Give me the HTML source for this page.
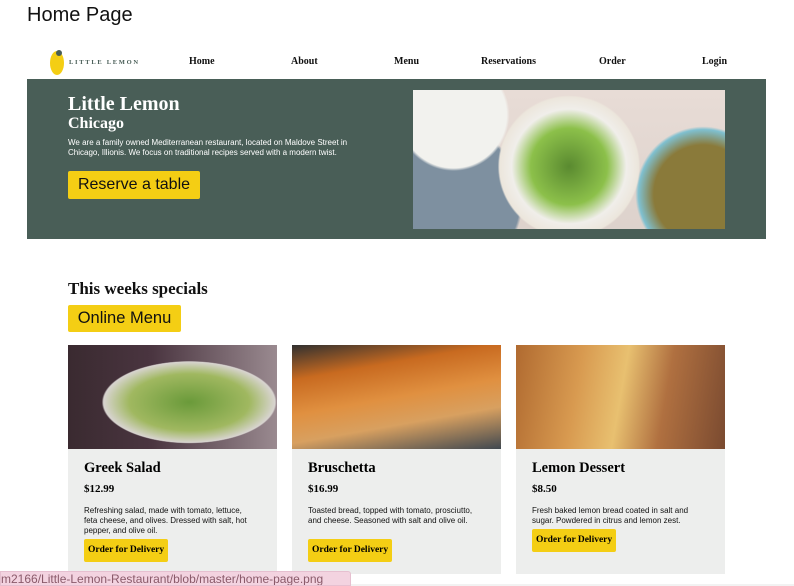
<!DOCTYPE html>
<html><head><meta charset="utf-8"><style>
*{margin:0;padding:0;box-sizing:border-box}
body{width:794px;height:586px;overflow:hidden;background:#fff;position:relative;font-family:"Liberation Sans",sans-serif}
.a{position:absolute}
.serif{font-family:"Liberation Serif",serif;font-weight:bold}
.nav{top:56px;font-size:10px;color:#111}
.card{background:#edeeed;top:449px;height:125px;width:209px}
.card h3{position:absolute;left:16px;top:11px;font-size:14.5px}
.card .p{position:absolute;left:16px;top:34px;font-size:11px}
.card .d{position:absolute;left:16px;top:57px;font-size:8px;line-height:10px;color:#111;width:172px}
.btn{position:absolute;left:16px;background:#f4ce14;border-radius:2px;font-family:"Liberation Serif",serif;font-weight:bold;font-size:9.5px;padding:6px 4px;height:23px;line-height:11px}
</style></head><body>
<div class="a" style="left:27px;top:4px;font-size:20px;color:#111">Home Page</div>
<div class="a" style="left:50px;top:51px;width:14px;height:24px;background:#f4ce14;border-radius:50%"></div>
<div class="a" style="left:56px;top:50px;width:6px;height:6px;background:#495e57;border-radius:50%"></div>
<div class="a serif" style="left:69px;top:59px;font-size:6.5px;letter-spacing:1.7px;color:#495e57">LITTLE LEMON</div>
<div class="a serif nav" style="left:189px">Home</div>
<div class="a serif nav" style="left:291px">About</div>
<div class="a serif nav" style="left:394px">Menu</div>
<div class="a serif nav" style="left:481px">Reservations</div>
<div class="a serif nav" style="left:599px">Order</div>
<div class="a serif nav" style="left:702px">Login</div>
<div class="a" style="left:27px;top:79px;width:739px;height:160px;background:#495e57"></div>
<div class="a serif" style="left:68px;top:93px;font-size:20px;color:#fff">Little Lemon</div>
<div class="a serif" style="left:68px;top:115px;font-size:16px;color:#fff">Chicago</div>
<div class="a" style="left:68px;top:138px;font-size:8px;line-height:10px;color:#fff;width:290px">We are a family owned Mediterranean restaurant, located on Maldove Street in Chicago, Illionis. We focus on traditional recipes served with a modern twist.</div>
<div class="a" style="left:68px;top:171px;width:132px;height:28px;background:#f4ce14;border-radius:2px;font-size:16px;line-height:28px;text-align:center;color:#111">Reserve a table</div>
<div class="a" style="left:413px;top:90px;width:312px;height:139px;background:radial-gradient(circle at 50% 55%,#5a8a30 0,#8cc04a 22%,#f0eeea 33%,#ece6dc 40%,transparent 41%),radial-gradient(circle at 13% 18%,#f2f2ee 18%,transparent 19%),radial-gradient(circle at 10% 80%,#7e90a0 25%,transparent 26%),radial-gradient(circle at 93% 75%,#8a7a3a 16%,#7fc0d0 21%,transparent 22%),linear-gradient(#e8dcd6,#ddd2cc)"></div>
<div class="a serif" style="left:68px;top:279px;font-size:17px;color:#111">This weeks specials</div>
<div class="a" style="left:68px;top:305px;width:113px;height:27px;background:#f4ce14;border-radius:2px;font-size:16.5px;line-height:27px;text-align:center;color:#111">Online Menu</div>
<div class="a" style="left:68px;top:345px;width:209px;height:104px;background:radial-gradient(ellipse at 58% 55%,#6a9a3a 0,#a0b860 35%,#d8d4d0 50%,transparent 51%),linear-gradient(90deg,#3a2a30,#4a3540 40%,#9a8a90)"></div>
<div class="a" style="left:292px;top:345px;width:209px;height:104px;background:linear-gradient(170deg,#303030 0,#c86a20 25%,#e09040 50%,#d8a060 70%,#404850 100%)"></div>
<div class="a" style="left:516px;top:345px;width:209px;height:104px;background:linear-gradient(100deg,#b06a30 0,#d89a50 30%,#e8c070 50%,#b07040 70%,#7a4a30 100%)"></div>
<div class="a card" style="left:68px"><h3 class="serif">Greek Salad</h3><div class="p serif">$12.99</div><div class="d">Refreshing salad, made with tomato, lettuce, feta cheese, and olives. Dressed with salt, hot pepper, and olive oil.</div><div class="btn" style="top:90px">Order for Delivery</div></div>
<div class="a card" style="left:292px"><h3 class="serif">Bruschetta</h3><div class="p serif">$16.99</div><div class="d">Toasted bread, topped with tomato, prosciutto, and cheese. Seasoned with salt and olive oil.</div><div class="btn" style="top:90px">Order for Delivery</div></div>
<div class="a card" style="left:516px"><h3 class="serif">Lemon Dessert</h3><div class="p serif">$8.50</div><div class="d">Fresh baked lemon bread coated in salt and sugar. Powdered in citrus and lemon zest.</div><div class="btn" style="top:80px">Order for Delivery</div></div>
<div class="a" style="left:0;top:584px;width:794px;height:2px;background:#f2f2f2"></div>
<div class="a" style="left:0;top:571px;width:351px;height:15px;background:#f3d3e0;border:1px solid #e6c0d0;border-radius:0 3px 0 0;font-size:12px;line-height:14px;color:#8a5a6a;white-space:nowrap;overflow:hidden">m2166/Little-Lemon-Restaurant/blob/master/home-page.png</div>
</body></html>
